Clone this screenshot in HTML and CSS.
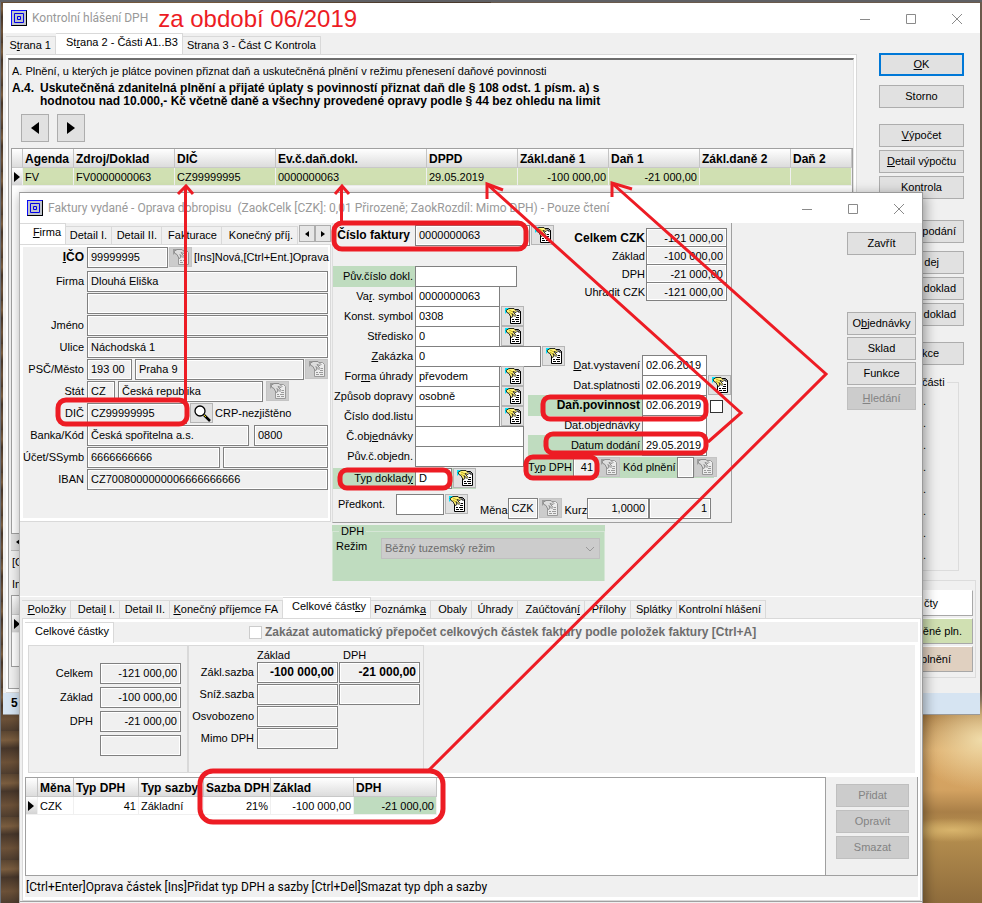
FILE: index.html
```html
<!DOCTYPE html>
<html lang="cs">
	<head>
		<meta charset="utf-8">
		<title>Kontrolní hlášení DPH</title>
		<link rel="stylesheet" href="styles.css">
	</head>
	<body>
		<svg class="symbols" aria-hidden="true">
			<symbol id="app-icon" viewBox="0 0 16 16">
				<rect width="16" height="16" fill="#00007a"/>
				<rect x="1" y="1" width="14" height="14" fill="#c0c4cc"/>
				<path d="M.5 15V.5H15" fill="none" stroke="#0a0aff"/>
				<path d="M3.500 3.500h9v9h-9zM6.500 6.500h3v3h-3z" fill="none" stroke="#0000e6"/>
				<path d="M15.500 1v14.500H1" fill="none" stroke="#000"/>
			</symbol>
			<symbol id="hand" viewBox="0 0 18 18">
				<path d="M1 1h6L1 7z" fill="#00e5ff"/>
				<path d="M7.500 2.500h7l2 2v12h-10V8z" fill="#fff" stroke="#000"/>
				<path d="M14 2.500V5h3" fill="none" stroke="#000"/>
				<path d="M8 12.500h2m1 0h4M8 14.500h3m1 0h3M12 10.500h3M13 8.500h2" stroke="#000"/>
				<path d="M2 3.500L5 1.500h5l3 3-1 1-3-1 3 4-1 1-3-3 1 3-2 1-2-4-2-1z" fill="#fff27a" stroke="#000" stroke-width=".8"/>
				<path d="M5 3l4 2M5 5l3 2" stroke="#b9a300" stroke-width=".8"/>
			</symbol>
			<symbol id="hand-off" viewBox="0 0 18 18">
				<path d="M1 1h6L1 7z" fill="#9c9c9c"/>
				<path d="M7.500 2.500h7l2 2v12h-10V8z" fill="#ececec" stroke="#999"/>
				<path d="M8 12.500h2m1 0h4M8 14.500h3m1 0h3M12 10.500h3M13 8.500h2" stroke="#999"/>
				<path d="M2 3.500L5 1.500h5l3 3-1 1-3-1 3 4-1 1-3-3 1 3-2 1-2-4-2-1z" fill="#ddd" stroke="#8c8c8c"/>
			</symbol>
			<symbol id="lens" viewBox="0 0 18 18">
				<path d="M11 11l6 6" stroke="#000" stroke-width="2.500"/>
				<path d="M11 11l2 2" stroke="#e8d800" stroke-width="1"/>
				<circle cx="7" cy="7" r="5" fill="#fff" stroke="#000" stroke-width="1.300"/>
			</symbol>
			<symbol id="min" viewBox="0 0 12 12"><path d="M1 6.500h10" stroke="#8a8a8a"/></symbol>
			<symbol id="max" viewBox="0 0 12 12"><path d="M1.500 1.500h9v9h-9z" fill="none" stroke="#8a8a8a"/></symbol>
			<symbol id="close" viewBox="0 0 12 12"><path d="M1 1l10 10M11 1L1 11" stroke="#8a8a8a"/></symbol>
		</svg>

		<div class="window report">
			<header class="titlebar">
				<svg class="app-icon"><use href="#app-icon"/></svg>
				<span class="title">Kontrolní hlášení DPH</span>
				<span class="period">za období 06/2019</span>
				<div class="controls">
					<button aria-label="Minimalizovat"><svg><use href="#min"/></svg></button>
					<button aria-label="Maximalizovat"><svg><use href="#max"/></svg></button>
					<button aria-label="Zavřít okno"><svg><use href="#close"/></svg></button>
				</div>
			</header>
			<div class="report-body">
				<main class="report-main">
					<nav class="tabs">
						<button class="tab w50">S<u>t</u>rana 1</button>
						<button class="tab active">St<u>r</u>ana 2 - Části A1..B3</button>
						<button class="tab">Strana 3 - Část C Kontrola</button>
					</nav>
					<div class="report-frame">
						<div class="report-page">
							<p class="chapter">A. Plnění, u kterých je plátce povinen přiznat daň a uskutečněná plnění v režimu přenesení daňové povinnosti</p>
							<div class="section">
								<b>A.4.</b>
								<b>Uskutečněná zdanitelná plnění a přijaté úplaty s povinností přiznat daň dle § 108 odst. 1 písm. a) s<br>hodnotou nad 10.000,- Kč včetně daně a všechny provedené opravy podle § 44 bez ohledu na limit</b>
							</div>
							<div class="pager">
								<button aria-label="Předchozí"><i class="arrow left"></i></button>
								<button aria-label="Další"><i class="arrow right"></i></button>
							</div>
							<div class="grid-box report-grid">
								<table class="grid">
									<colgroup><col class="c-mark"><col class="c-agenda"><col class="c-doc"><col class="c-doc"><col class="c-ev"><col class="c-num"><col class="c-num"><col class="c-num"><col class="c-num"><col></colgroup>
									<tr><th></th><th>Agenda</th><th>Zdroj/Doklad</th><th>DIČ</th><th>Ev.č.daň.dokl.</th><th>DPPD</th><th>Zákl.daně 1</th><th>Daň 1</th><th>Zákl.daně 2</th><th>Daň 2</th></tr>
									<tr class="green-row"><td class="mark"><i class="arrow right"></i></td><td>FV</td><td>FV0000000063</td><td>CZ99999995</td><td>0000000063</td><td>29.05.2019</td><td class="num">-100 000,00</td><td class="num">-21 000,00</td><td></td><td></td></tr>
								</table>
							</div>
							<div class="scrollbar"><i class="arrow left small"></i></div>
							<p class="hint">[C</p>
							<p class="hint">In</p>
							<div class="grid-box lower-grid">
								<table class="grid">
									<colgroup><col class="c-mark"><col></colgroup>
									<tr><th></th><th></th></tr>
									<tr><td class="mark"><i class="arrow right"></i></td><td></td></tr>
								</table>
							</div>
						</div>
					</div>
				</main>
				<aside class="report-side">
					<button class="btn default"><u>O</u>K</button>
					<button class="btn">Storno</button>
					<button class="btn group"><u>V</u>ýpočet</button>
					<button class="btn"><u>D</u>etail výpočtu</button>
					<button class="btn">Kontrola</button>
					<button class="btn group2 cut">podání</button>
					<button class="btn group3 cut-short">dej</button>
					<button class="btn cut">doklad</button>
					<button class="btn cut">doklad</button>
					<button class="btn group cut-short">kce</button>
					<fieldset class="parts">
						<legend>části</legend>
						<span>.</span><span>.</span><span>.</span><span>.</span><span>.</span><span>.</span><span>.</span><span>.</span>
					</fieldset>
					<div class="legend-box">
						<span class="key white">čty</span>
						<span class="key green">něné pln.</span>
						<span class="key beige">plnění</span>
					</div>
				</aside>
			</div>
			<footer class="statusbar">5</footer>
		</div>

		<div class="window invoice">
			<header class="titlebar">
				<svg class="app-icon"><use href="#app-icon"/></svg>
				<span class="title">Faktury vydané - Oprava dobropisu &nbsp;(ZaokCelk [CZK]: 0,01 Přirozeně; ZaokRozdíl: Mimo DPH) - Pouze čtení</span>
				<div class="controls">
					<button aria-label="Minimalizovat"><svg><use href="#min"/></svg></button>
					<button aria-label="Maximalizovat"><svg><use href="#max"/></svg></button>
					<button aria-label="Zavřít okno"><svg><use href="#close"/></svg></button>
				</div>
			</header>

			<div class="invoice-top">
				<section class="company">
					<nav class="tabs">
						<button class="tab active w46"><u>F</u>irma</button>
						<button class="tab w46">Detail I.</button>
						<button class="tab w50">Detail II.</button>
						<button class="tab w60">Fakturace</button>
						<button class="tab w76">Konečný příj.</button>
						<span class="tab-scroll">
							<button aria-label="Záložky vlevo"><i class="arrow left small"></i></button>
							<button aria-label="Záložky vpravo"><i class="arrow right small"></i></button>
						</span>
					</nav>
					<div class="company-frame">
						<form class="company-form">
							<div class="row first">
								<label for="ico"><b><u>I</u>ČO</b></label>
								<input id="ico" class="w81" value="99999995" readonly>
								<button type="button" class="icon-btn off" aria-label="Vybrat firmu" disabled><svg><use href="#hand-off"/></svg></button>
								<span class="note">[Ins]Nová,[Ctrl+Ent.]Oprava</span>
							</div>
							<div class="row"><label for="firma">Firma</label><input id="firma" class="grow" value="Dlouhá Eliška" readonly></div>
							<div class="row"><label for="firma2"></label><input id="firma2" class="grow" aria-label="Firma 2" readonly></div>
							<div class="row"><label for="jmeno">Jméno</label><input id="jmeno" class="grow" readonly></div>
							<div class="row"><label for="ulice">Ulice</label><input id="ulice" class="grow" value="Náchodská 1" readonly></div>
							<div class="row">
								<label for="psc">PSČ/Město</label>
								<input id="psc" class="w45" value="193 00" readonly>
								<input class="grow gap3" aria-label="Město" value="Praha 9" readonly>
								<button type="button" class="icon-btn off" aria-label="Vybrat město" disabled><svg><use href="#hand-off"/></svg></button>
							</div>
							<div class="row">
								<label for="stat">Stát</label>
								<input id="stat" class="w28" value="CZ" readonly>
								<input class="w145 gap3" aria-label="Název státu" value="Česká republika" readonly>
								<button type="button" class="icon-btn off gap3" aria-label="Vybrat stát" disabled><svg><use href="#hand-off"/></svg></button>
							</div>
							<div class="row">
								<label for="dic">DIČ</label>
								<input id="dic" class="w100" value="CZ99999995" readonly>
								<button type="button" class="icon-btn gap3" aria-label="Ověřit DIČ"><svg><use href="#lens"/></svg></button>
								<span class="note">CRP-nezjištěno</span>
							</div>
							<div class="row">
								<label for="banka">Banka/Kód</label>
								<input id="banka" class="grow" value="Česká spořitelna a.s." readonly>
								<input class="w74 gap5" aria-label="Kód banky" value="0800" readonly>
							</div>
							<div class="row">
								<label for="ucet">Účet/SSymb</label>
								<input id="ucet" class="grow" value="6666666666" readonly>
								<input class="w105 gap3" aria-label="Specifický symbol" readonly>
							</div>
							<div class="row"><label for="iban">IBAN</label><input id="iban" class="grow" value="CZ7008000000006666666666" readonly></div>
						</form>
					</div>
				</section>

				<section class="document">
					<form class="document-form">
						<div class="doc-columns">
							<div class="doc-left">
								<div class="row head">
									<label for="cislo"><b>Číslo faktury</b></label>
									<input id="cislo" class="w115" value="0000000063" readonly>
									<button type="button" class="icon-btn" aria-label="Vybrat číslo"><svg><use href="#hand"/></svg></button>
								</div>
								<div class="row"><label class="tint" for="puvcislo">Pův.číslo dokl.</label><input id="puvcislo" class="w102"></div>
								<div class="row"><label for="vs">Va<u>r</u>. symbol</label><input id="vs" class="w85" value="0000000063"></div>
								<div class="row"><label for="ks">Konst. symbol</label><input id="ks" class="w85" value="0308"><button type="button" class="icon-btn" aria-label="Vybrat symbol"><svg><use href="#hand"/></svg></button></div>
								<div class="row"><label for="stred">Středisko</label><input id="stred" class="w85" value="0"><button type="button" class="icon-btn" aria-label="Vybrat středisko"><svg><use href="#hand"/></svg></button></div>
								<div class="row"><label for="zak"><u>Z</u>akázka</label><input id="zak" class="w126" value="0"><button type="button" class="icon-btn" aria-label="Vybrat zakázku"><svg><use href="#hand"/></svg></button></div>
								<div class="row"><label for="uhrada">For<u>m</u>a úhrady</label><input id="uhrada" class="w85" value="převodem"><button type="button" class="icon-btn" aria-label="Vybrat úhradu"><svg><use href="#hand"/></svg></button></div>
								<div class="row"><label for="doprava">Způsob dopravy</label><input id="doprava" class="w85" value="osobně"><button type="button" class="icon-btn" aria-label="Vybrat dopravu"><svg><use href="#hand"/></svg></button></div>
								<div class="row"><label for="dodlist">Číslo dod.listu</label><input id="dodlist" class="w85"><button type="button" class="icon-btn" aria-label="Vybrat dodací list"><svg><use href="#hand"/></svg></button></div>
								<div class="row"><label for="cobj">Č.obj<u>e</u>dnávky</label><input id="cobj" class="w109"></div>
								<div class="row"><label for="pobj">Pův.č.objedn.</label><input id="pobj" class="w109"></div>
								<div class="row tint doc-type"><label for="typd">Typ doklad<u>y</u></label><input id="typd" class="w37" value="D"><button type="button" class="icon-btn" aria-label="Vybrat typ dokladu"><svg><use href="#hand"/></svg></button></div>
							</div>
							<div class="doc-right">
								<div class="totals">
									<label for="celkem"><b>Celkem CZK</b></label><input id="celkem" value="-121 000,00" readonly>
									<label for="zaklad">Základ</label><input id="zaklad" value="-100 000,00" readonly>
									<label for="dph">DPH</label><input id="dph" value="-21 000,00" readonly>
									<label for="uhradit">Uhradit CZK</label><input id="uhradit" value="-121 000,00" readonly>
								</div>
								<div class="dates">
									<div class="row"><label for="dvyst"><u>D</u>at.vystavení</label><input id="dvyst" class="w65" value="02.06.2019"></div>
									<div class="row"><label for="dspl">Dat.splatnosti</label><input id="dspl" class="w65" value="02.06.2019"><button type="button" class="icon-btn" aria-label="Vybrat splatnost"><svg><use href="#hand"/></svg></button></div>
									<div class="row"><label class="tint" for="dpov"><b>Daň.povinnost</b></label><input id="dpov" class="w65" value="02.06.2019"><input type="checkbox" class="check gap3" aria-label="Ruční datum"></div>
									<div class="row"><label for="dobj">Dat.objednávky</label><input id="dobj" class="w65"></div>
									<div class="row"><label class="tint" for="ddod">Datum dodání</label><input id="ddod" class="w65" value="29.05.2019"></div>
								</div>
								<div class="row tint vat-type">
									<label for="tdph">T<u>y</u>p DPH</label><input id="tdph" class="w24 num" value="41" readonly>
									<button type="button" class="icon-btn off" aria-label="Vybrat typ DPH" disabled><svg><use href="#hand-off"/></svg></button>
									<label for="kplneni">Kód plnění</label><input id="kplneni" class="w17" readonly>
									<button type="button" class="icon-btn off" aria-label="Vybrat kód" disabled><svg><use href="#hand-off"/></svg></button>
								</div>
							</div>
						</div>
						<div class="doc-footer">
							<div class="row"><label class="prek" for="predkont">Předkont.</label><input id="predkont" class="w48"><button type="button" class="icon-btn" aria-label="Vybrat předkontaci"><svg><use href="#hand"/></svg></button></div>
							<div class="row currency">
								<label for="mena">Měna</label><input id="mena" class="w30" value="CZK" readonly>
								<button type="button" class="icon-btn off" aria-label="Vybrat měnu" disabled><svg><use href="#hand-off"/></svg></button>
								<label for="kurz">Kurz</label><input id="kurz" class="w62 num" value="1,0000" readonly><input class="w62 num" aria-label="Množství" value="1" readonly>
							</div>
						</div>
					</form>
					<div class="vat-mode">
						<fieldset>
							<legend>DPH</legend>
							<label for="rezim">Režim</label>
							<select id="rezim" disabled><option>Běžný tuzemský režim</option></select>
						</fieldset>
					</div>
				</section>

				<aside class="invoice-side">
					<button class="btn">Zavřít</button>
					<button class="btn apart">O<u>b</u>jednávky</button>
					<button class="btn">Sklad</button>
					<button class="btn">Funkce</button>
					<button class="btn" disabled><u>H</u>ledání</button>
				</aside>
			</div>

			<section class="invoice-bottom">
				<nav class="tabs">
					<button class="tab w49"><u>P</u>oložky</button>
					<button class="tab w49">Detai<u>l</u> I.</button>
					<button class="tab w50">Detail II.</button>
					<button class="tab w113"><u>K</u>onečný příjemce FA</button>
					<button class="tab active w88">Celkové část<u>k</u>y</button>
					<button class="tab w60">Poznámk<u>a</u></button>
					<button class="tab w41">Obaly</button>
					<button class="tab w46">Úhrady</button>
					<button class="tab w67">Zaúčtován<u>í</u></button>
					<button class="tab w46">Přílohy</button>
					<button class="tab w46">Splátky</button>
					<button class="tab w89">Kontrolní hlášení</button>
				</nav>
				<div class="sums-frame">
					<div class="sums-tabs">
						<nav class="tabs"><button class="tab active w89">Celkové částky</button></nav>
						<span class="auto"><input type="checkbox" id="auto" class="check" disabled><label for="auto">Zakázat automatický přepočet celkových částek faktury podle položek faktury [Ctrl+A]</label></span>
					</div>
					<div class="sums">
						<div class="sum-group totals-group">
							<label for="s1">Celkem</label><input id="s1" value="-121 000,00" readonly>
							<label for="s2">Základ</label><input id="s2" value="-100 000,00" readonly>
							<label for="s3">DPH</label><input id="s3" value="-21 000,00" readonly>
							<span></span><input aria-label="Ostatní" readonly>
						</div>
						<div class="sum-group rates-group">
							<span></span><span>Základ</span><span class="vat">DPH</span>
							<label for="r1">Zákl.sazba</label><input id="r1" class="bold" value="-100 000,00" readonly><input class="bold" aria-label="DPH základní" value="-21 000,00" readonly>
							<label for="r2">Sníž.sazba</label><input id="r2" readonly><input aria-label="DPH snížená" readonly>
							<label for="r3">Osvobozeno</label><input id="r3" readonly><span></span>
							<label for="r4">Mimo DPH</label><input id="r4" readonly><span></span>
						</div>
					</div>
					<div class="rates">
						<div class="grid-box rates-grid">
							<table class="grid">
								<colgroup><col class="c-mark"><col class="c-cur"><col class="c-type"><col class="c-type"><col class="c-rate"><col class="c-sum"><col class="c-sum"></colgroup>
								<tr><th></th><th>Měna</th><th>Typ DPH</th><th>Typ sazby</th><th>Sazba DPH</th><th>Základ</th><th>DPH</th></tr>
								<tr><td class="mark"><i class="arrow right"></i></td><td>CZK</td><td class="num">41</td><td>Základní</td><td class="num">21%</td><td class="num">-100 000,00</td><td class="num tint">-21 000,00</td></tr>
							</table>
						</div>
						<div class="rates-side">
							<button class="btn" disabled>Přidat</button>
							<button class="btn" disabled>Opravit</button>
							<button class="btn" disabled>Smazat</button>
						</div>
					</div>
					<p class="keys">[Ctrl+Enter]Oprava částek [Ins]Přidat typ DPH a sazby [Ctrl+Del]Smazat typ dph a sazby</p>
				</div>
			</section>
		</div>

		<svg class="marks" aria-hidden="true">
			<g class="thick">
				<rect x="334" y="223" width="192" height="26" rx="8"/>
				<rect x="58" y="400" width="129" height="24" rx="8"/>
				<rect x="340" y="470" width="110" height="18" rx="7"/>
				<rect x="543" y="397" width="163" height="22" rx="7"/>
				<rect x="546" y="434" width="160" height="19" rx="7"/>
				<rect x="526" y="457" width="71" height="21" rx="7"/>
				<rect x="200" y="771" width="243" height="51" rx="13"/>
			</g>
			<g class="thin">
				<path d="M185.500 402V187M178 194l8-8 7 8"/>
				<path d="M341.500 222V187M335 194l7-8 7 8"/>
				<path d="M708 442l33-29L488 185M487 199l0-15 16 6"/>
				<path d="M427 772L826 374 613 184M612 197V183l20 6"/>
			</g>
		</svg>
	</body>
</html>
```
FILE: styles.css
```css
* {
	box-sizing: border-box;
}

body {
	margin: 0;
	height: 100vh;
	position: relative;
	overflow: hidden;
	font-family: "Liberation Sans", Arial, sans-serif;
	font-size: 11px;
	line-height: 13px;
	color: #000;
	background:
		linear-gradient(#5f6064, #5f6064) 0 0 / 100% 2px no-repeat,
		linear-gradient(#6b7078, #6b7078) 0 0 / 1px 100% no-repeat,
		repeating-linear-gradient(178deg, #5b4632 0, #7a5d3f 9px, #46362a 17px, #6c5138 31px, #4d3c2e 43px) 0 0 / 50% 100% no-repeat,
		radial-gradient(ellipse 70px 50px at 100% 740px, #f0dcaa, transparent),
		radial-gradient(ellipse 60px 12px at 97% 830px, #d8b46c, transparent),
		linear-gradient(#6a5a4c 0, #6b5848 700px, #a8793f 716px, #dba763 750px, #d3a261 790px, #a97f47 812px, #b89150 830px, #8f6c3c 100%);
}

button, input, select {
	font: inherit;
	color: inherit;
	margin: 0;
	padding: 0;
}

p, fieldset, legend {
	margin: 0;
	padding: 0;
}

b, th {
	font-size: 12px;
}

.symbols {
	display: none;
}

/* windows */

.window {
	position: absolute;
	display: flex;
	flex-direction: column;
	background: #f0f0f0;
}

.report {
	top: 3px;
	left: 3px;
	right: 2px;
}

.invoice {
	top: 192px;
	left: 19px;
	right: 59px;
	bottom: -6px;
	border: 1px solid #9a9a9a;
	border-left-color: #b4b4b4;
	box-shadow: 2px 3px 12px rgba(0,0,0,0.4);
}

.titlebar {
	display: flex;
	flex: none;
	align-items: center;
	height: 30px;
	background: #fff;
	padding-left: 8px;
	font-family: Roboto, sans-serif;
	color: #999;
	white-space: nowrap;
}

.invoice .titlebar {
	padding-left: 7px;
}

.title {
	font-size: 12px;
}

.app-icon {
	width: 16px;
	height: 16px;
	margin-right: 5px;
}

.period {
	font-family: "Liberation Sans", Arial, sans-serif;
	font-size: 24px;
	color: #ed1c24;
	margin-left: 10px;
}

.controls {
	display: flex;
	margin-left: auto;
}

.controls button {
	width: 46px;
	height: 30px;
	border: 0;
	background: none;
}

.controls svg {
	width: 12px;
	height: 12px;
	vertical-align: middle;
}

/* tabs */

.tabs {
	display: flex;
	align-items: flex-end;
	height: 21px;
}

.tab {
	height: 18px;
	padding: 0 4px;
	border: 1px solid #d9d9d9;
	border-left-width: 0;
	border-bottom: 0;
	background: #f0f0f0;
	white-space: nowrap;
	flex: none;
	display: flex;
	justify-content: flex-end;
	align-items: center;
}

.tab.active {
	height: 21px;
	background: #fff;
	padding-left: 10px;
	padding-bottom: 3px;
}

/* keeps the space beside an underlined letter */
.tab {
	white-space: pre;
}

.tab-scroll {
	display: flex;
	margin-left: auto;
	align-self: flex-start;
	padding-top: 2px;
}

.tab-scroll button {
	width: 16px;
	height: 17px;
	border: 1px solid #adadad;
	background: #e6e6e6;
	line-height: 0;
}

.arrow {
	display: inline-block;
	border: 6px solid transparent;
}

.arrow.left {
	border-left: 0;
	border-right: 8px solid #000;
}

.arrow.right {
	border-right: 0;
	border-left: 8px solid #000;
}

.arrow.small {
	border-top-width: 3px;
	border-bottom-width: 3px;
}

.arrow.left.small {
	border-right-width: 4px;
}

.arrow.right.small {
	border-left-width: 4px;
}

/* buttons */

.btn {
	width: 100%;
	height: 23px;
	flex: none;
	border: 1px solid #adadad;
	background: #e1e1e1;
	text-align: center;
	white-space: nowrap;
}

.btn.default {
	border: 2px solid #0078d7;
}

.btn:disabled {
	background: #ccc;
	border-color: #bfbfbf;
	color: #838383;
}

.icon-btn {
	width: 23px;
	height: 20px;
	flex: none;
	border: 1px solid #b5b5b5;
	background: #e1e1e1;
	display: flex;
	justify-content: center;
	align-items: center;
	margin-left: 1px;
}

.icon-btn.off {
	background: #ccc;
	border-color: #c4c4c4;
}

.icon-btn svg {
	width: 18px;
	height: 18px;
}

/* report window */

.report-body {
	display: flex;
	flex: 1;
}

.report-main {
	flex: 1;
	min-width: 0;
	padding-left: 3px;
}

.report-frame {
	background: #fff;
	border: 1px solid #d9d9d9;
	border-left: 0;
	padding: 3px 2px;
}

.report-page {
	height: 631px;
	background: #f0f0f0;
	border: 1px solid #a0a0a0;
	border-top: 2px solid #6d6d6d;
	border-right-color: #e3e3e3;
	padding-left: 2px;
	padding-top: 5px;
	overflow: hidden;
	white-space: nowrap;
}

.chapter {
	padding-left: 1px;
}

.section {
	display: flex;
	gap: 6px;
	padding: 4px 1px;
}

.pager {
	display: flex;
	gap: 8px;
	padding: 2px 10px 6px;
}

.pager button {
	width: 28px;
	height: 28px;
	border: 1px solid #adadad;
	background: #e1e1e1;
	display: flex;
	justify-content: center;
	align-items: center;
}

.grid-box {
	background: #fff;
	border: 1px solid #a0a0a0;
	overflow: hidden;
}

.grid {
	border-collapse: separate;
	border-spacing: 0;
	table-layout: fixed;
	width: 0;
}

.report-grid {
	height: 386px;
}

.report-grid .grid, .lower-grid .grid {
	width: 100%;
}

.grid th {
	height: 19px;
	padding: 2px 2px 0;
	text-align: left;
	background: linear-gradient(#fff, #dcdcdc);
	border-right: 1px solid #c4c4c4;
	border-bottom: 1px solid #c8c8c8;
	overflow: hidden;
	white-space: nowrap;
}

.grid td {
	height: 18px;
	padding: 1px 2px 0;
	border-right: 1px solid #f0f0f0;
	border-bottom: 1px solid #f0f0f0;
	white-space: nowrap;
}

.grid .num, input.num {
	text-align: right;
}

.grid .mark {
	background: linear-gradient(#fff, #d4d4d4);
	padding: 0 2px;
	line-height: 0;
}

.grid .mark .arrow {
	border-top-width: 5px;
	border-bottom-width: 5px;
	border-left-width: 6px;
}

.grid .green-row td:not(.mark) {
	background: #d0e0b2;
}

.c-mark { width: 12px; }
.c-agenda { width: 51px; }
.c-doc { width: 101px; }
.c-ev { width: 151px; }
.c-num { width: 91px; }

.report-grid .c-mark { width: 11px; }

.scrollbar {
	height: 17px;
	background: #e0e0e0;
	padding: 1px 5px;
	border-bottom: 1px solid #bbb;
}

.hint {
	padding: 5px 1px 4px;
}

.lower-grid {
	height: 72px;
}

.report-side {
	width: 123px;
	padding: 20px 16px 0 22px;
	display: flex;
	flex-direction: column;
	gap: 3px;
}

.report-side .default {
	margin-bottom: 6px;
}

.btn.group {
	margin-top: 13px;
}

.btn.group2 {
	margin-top: 18px;
}

.btn.group3 {
	margin-top: 5px;
}

.btn.cut {
	text-align: right;
	padding-right: 7px;
}

.btn.cut-short {
	text-align: right;
	padding-right: 24px;
}

.parts {
	min-width: 0;
	height: 195px;
	margin: 8px 5px 0 0;
	border: 1px solid #dcdcdc;
	display: flex;
	flex-direction: column;
	padding: 6px 32px 0 0;
	text-align: right;
}

.parts legend {
	margin-left: 42px;
	padding-right: 2px;
	text-align: left;
}

.parts span {
	height: 22px;
}

.legend-box {
	margin: 6px -12px 0 0;
	height: 98px;
	border: 1px solid #dcdcdc;
	display: flex;
	flex-direction: column;
	gap: 2px;
	padding: 9px 2px 0;
}

.key {
	height: 26px;
	border: 1px solid #a8a8a8;
	border-top-color: #fff;
	line-height: 24px;
	text-align: right;
	padding-right: 10px;
}

.key.white {
	background: #fff;
	padding-right: 34px;
}

.key.green {
	background: #d0e0b2;
}

.key.beige {
	background: #e0d0c0;
	padding-right: 21px;
}

.statusbar {
	height: 22px;
	background: #d6e4f2;
	border-bottom: 1px solid #999;
	padding: 4px 8px;
	font-size: 12px;
	font-weight: bold;
}

/* form rows */

.row {
	display: flex;
	height: 20px;
}

.row label {
	flex: none;
	white-space: nowrap;
	text-align: right;
	padding-top: 4px;
	height: 21px;
}

input {
	height: 21px;
	padding: 0 3px 2px 3px;
	border: 1px solid #808080;
	border-radius: 0;
	background: #fff;
	flex: none;
	min-width: 0;
	outline: none;
}

input[readonly] {
	background: #f0f0f0;
	box-shadow: inset 0 0 0 1px #fff;
}

input.grow {
	flex: 1;
}

.check {
	appearance: none;
	width: 13px;
	height: 13px;
	padding: 0;
	border: 1px solid #333;
	background: #fff;
}

.check:disabled {
	border-color: #ccc;
}

.tint, .grid .tint {
	background: #bfdcbf;
}

.gap3 { margin-left: 3px; }
.gap5 { margin-left: 5px; }
.w17 { width: 17px; }
.w24 { width: 24px; }
.w28 { width: 28px; }
.w30 { width: 30px; }
.w37 { width: 37px; }
.w41 { width: 41px; }
.w45 { width: 45px; }
.w46 { width: 46px; }
.w48 { width: 48px; }
.w49 { width: 49px; }
.w50 { width: 50px; }
.w60 { width: 60px; }
.w62 { width: 62px; }
.w65 { width: 65px; }
.w67 { width: 67px; }
.w74 { width: 74px; }
.w76 { width: 76px; }
.w81 { width: 81px; }
.w85 { width: 85px; }
.w88 { width: 88px; }
.w89 { width: 89px; }
.w100 { width: 100px; }
.w102 { width: 102px; }
.w105 { width: 105px; }
.w109 { width: 109px; }
.w113 { width: 113px; }
.w115 { width: 115px; }
.w126 { width: 126px; }
.w145 { width: 145px; }

/* invoice window */

.invoice-top {
	display: flex;
	flex: none;
	height: 373px;
}

.company {
	width: 311px;
	flex: none;
}

.company-frame {
	height: 278px;
	background: #fff;
	padding: 2px 2px 3px 3px;
	border: 1px solid #d9d9d9;
	border-left: 0;
}

.company-form {
	height: 100%;
	background: #f0f0f0;
}

.company-form .row {
	height: 22px;
}

.company-form .row.first {
	height: 24px;
}

.company-form label {
	width: 64px;
	padding-right: 3px;
	padding-top: 4px;
}

.note {
	padding: 4px 2px;
	white-space: nowrap;
}

.document {
	width: 401px;
	flex: none;
	padding-left: 1px;
}

.document-form {
	height: 300px;
	border: 1px solid #a0a0a0;
	border-top: 0;
	border-left-color: #ddd;
	padding-top: 2px;
}

.doc-columns {
	display: flex;
	height: 269px;
}

.doc-left {
	width: 191px;
	flex: none;
}

.doc-left label {
	width: 82px;
	padding-right: 2px;
}

.row.head {
	height: 41px;
}

.head label {
	padding-right: 5px;
}

.row.doc-type {
	width: 143px;
	height: 21px;
	margin-top: 2px;
}

.doc-right {
	flex: 1;
	padding-top: 3px;
}

.totals {
	display: grid;
	grid-template-columns: 1fr 81px;
	grid-auto-rows: 18px;
	padding-right: 4px;
	text-align: right;
}

.totals label {
	padding: 4px 1px 0;
}

.totals input, .sums input {
	text-align: right;
}

.totals input {
	height: 19px;
	padding-bottom: 0;
}

.dates {
	margin: 55px 0 0 4px;
}

.dates label {
	width: 114px;
	padding-right: 2px;
}

.dates .check {
	margin-top: 5px;
}

.row.vat-type {
	margin-left: 4px;
	width: 186px;
	height: 21px;
	margin-top: 2px;
}

.vat-type label {
	padding-right: 1px;
}

.vat-type .icon-btn + label {
	padding-left: 3px;
}

.vat-type .icon-btn {
	margin-left: 0;
}

.doc-footer {
	display: flex;
	gap: 12px;
}

.doc-footer .prek {
	width: 63px;
	text-align: left;
	padding-left: 5px;
}

.currency {
	padding-top: 4px;
}

.currency label {
	padding-top: 6px;
}

.currency .icon-btn + label {
	padding-left: 3px;
}

.vat-mode {
	width: 273px;
	height: 56px;
	margin-top: 2px;
	background: #bfdcbf;
}

.vat-mode fieldset {
	border: 1px solid #d5e6d5;
	border-bottom: 0;
	height: 56px;
	display: flex;
	padding-left: 3px;
}

.vat-mode legend {
	margin-left: 3px;
	padding: 0 2px;
}

.vat-mode label {
	width: 45px;
	padding-top: 2px;
}

.vat-mode select {
	width: 219px;
	height: 21px;
	border: 1px solid #bfbfbf;
	border-radius: 0;
	color: #6d6d6d;
	opacity: 1;
	appearance: none;
	padding-left: 3px;
	background: #ccc url("data:image/svg+xml,%3Csvg xmlns='http://www.w3.org/2000/svg' width='10' height='6'%3E%3Cpath d='M1 1l4 4 4-4' fill='none' stroke='%23999'/%3E%3C/svg%3E") no-repeat right 4px center;
}

.invoice-side {
	margin-left: auto;
	width: 75px;
	padding: 9px 6px 0 0;
	display: flex;
	flex-direction: column;
	gap: 2px;
}

.btn.apart {
	margin-top: 55px;
}

.invoice-bottom {
	border-top: 1px solid #fff;
	border-bottom: 1px solid #a0a0a0;
	padding: 0 1px 0 2px;
}

.sums-frame {
	border: 1px solid #d9d9d9;
	background: #fff;
	padding: 3px 2px;
}

.sums-tabs {
	display: flex;
	background: #f0f0f0;
	height: 20px;
}

.auto {
	display: flex;
	align-items: center;
	gap: 3px;
	margin-left: 135px;
	font-size: 12px;
	font-weight: bold;
	color: #6d6d6d;
	white-space: nowrap;
}

.sums {
	display: flex;
	height: 135px;
	border: 3px solid #fff;
	border-bottom-width: 4px;
	background: #f0f0f0;
}

.sum-group {
	display: grid;
	border: 1px solid #d9d9d9;
	align-content: start;
	text-align: right;
}

.totals-group {
	width: 160px;
	grid-template-columns: 71px 81px;
	grid-auto-rows: 24px;
	padding-top: 17px;
}

.totals-group label {
	padding: 4px 7px 0 0;
}

.rates-group {
	width: 236px;
	grid-template-columns: 68px 82px 81px;
	grid-template-rows: 16px;
	grid-auto-rows: 22px;
}

.rates-group label {
	padding: 4px 3px 0 0;
}

.rates-group span {
	text-align: left;
	padding-top: 3px;
}

.rates-group .vat {
	padding-left: 4px;
}

.sums input {
	width: 81px;
}

.sums input.bold {
	font-size: 12px;
	font-weight: bold;
}

.rates {
	display: flex;
	height: 99px;
	background: #f0f0f0;
}

.rates-grid {
	flex: 1;
}

.rates-side {
	width: 92px;
	padding: 7px 8px 0 10px;
	border: 1px solid #a0a0a0;
	border-width: 0 1px 1px 0;
	display: flex;
	flex-direction: column;
	gap: 3px;
}

.c-cur { width: 36px; }
.c-type { width: 65px; }
.c-rate { width: 67px; }
.c-sum { width: 83px; }

.keys {
	background: #f0f0f0;
	height: 21px;
	padding: 5px 1px;
	font-family: Roboto, sans-serif;
	font-size: 12px;
	white-space: nowrap;
}

/* red annotations over both windows */

.marks {
	position: absolute;
	top: 0;
	left: 0;
	width: 982px;
	height: 903px;
	pointer-events: none;
	fill: none;
	stroke: #ed1c24;
}

.thick {
	stroke-width: 5px;
}

.thin {
	stroke-width: 3px;
}
```
